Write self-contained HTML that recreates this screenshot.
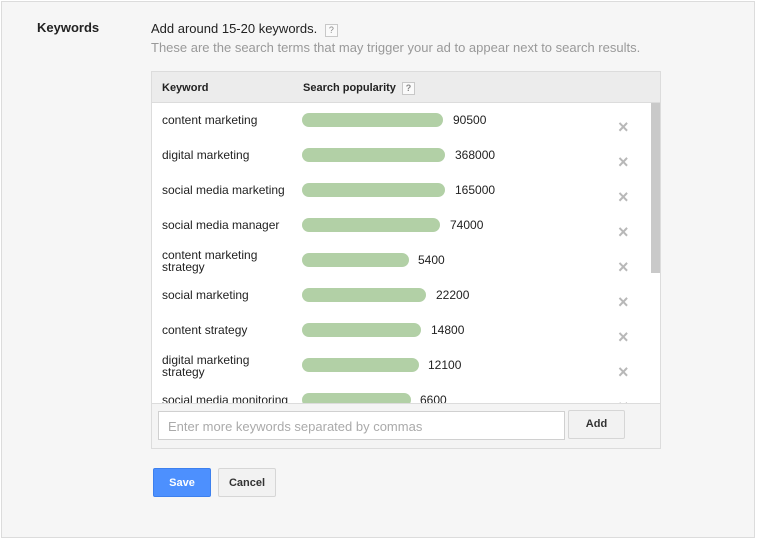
<!DOCTYPE html>
<html><head><style>
body{margin:0;width:758px;height:542px;background:#fff;font-family:"Liberation Sans",Arial,sans-serif;position:relative;overflow:hidden}
.a{position:absolute}
#box{left:1px;top:1px;width:752px;height:535px;background:#f6f6f6;border:1px solid #dcdcdc}
.q{display:inline-block;width:11px;height:11px;border:1px solid #c8c8c8;font-size:9px;line-height:11px;text-align:center;color:#888;background:#fafafa}
.kw{font-size:12px;color:#222;line-height:12px}
.bar{height:14px;border-radius:7px;background:#b2d0a6}
.num{font-size:12px;color:#222}
.x{font-size:18px;color:#b8b8b8;font-weight:bold}
</style></head><body>
<div id="box" class="a"></div>
<div class="a" style="left:37px;top:20px;font-size:13px;font-weight:bold;color:#222">Keywords</div>
<div class="a" style="left:151px;top:21px;font-size:13px;color:#222">Add around 15-20 keywords. <span class="q" style="margin-left:4px">?</span></div>
<div class="a" style="left:151px;top:40px;font-size:13px;color:#999">These are the search terms that may trigger your ad to appear next to search results.</div>
<div class="a" style="left:151px;top:71px;width:508px;height:376px;border:1px solid #dcdcdc;background:#fff"></div>
<div class="a" style="left:152px;top:72px;width:508px;height:30px;background:#ececec;border-bottom:1px solid #dcdcdc"></div>
<div class="a" style="left:162px;top:82px;font-size:11px;font-weight:bold;color:#222">Keyword</div>
<div class="a" style="left:303px;top:82px;font-size:11px;font-weight:bold;color:#222">Search popularity <span class="q" style="margin-left:3px">?</span></div>
<div class="a" style="left:651px;top:103px;width:9px;height:170px;background:#c9c9c9"></div>
<div class="a" style="left:152px;top:103px;width:498px;height:300px;overflow:hidden">
<div style="position:relative">
<div class="a kw" style="left:10px;top:11px">content marketing</div><div class="a bar" style="left:150px;top:10px;width:141px"></div><div class="a num" style="left:301px;top:10px">90500</div><div class="a x" style="left:466px;top:14px">×</div>
<div class="a kw" style="left:10px;top:46px">digital marketing</div><div class="a bar" style="left:150px;top:45px;width:143px"></div><div class="a num" style="left:303px;top:45px">368000</div><div class="a x" style="left:466px;top:49px">×</div>
<div class="a kw" style="left:10px;top:81px">social media marketing</div><div class="a bar" style="left:150px;top:80px;width:143px"></div><div class="a num" style="left:303px;top:80px">165000</div><div class="a x" style="left:466px;top:84px">×</div>
<div class="a kw" style="left:10px;top:116px">social media manager</div><div class="a bar" style="left:150px;top:115px;width:138px"></div><div class="a num" style="left:298px;top:115px">74000</div><div class="a x" style="left:466px;top:119px">×</div>
<div class="a kw" style="left:10px;top:146px">content marketing<br>strategy</div><div class="a bar" style="left:150px;top:150px;width:107px"></div><div class="a num" style="left:266px;top:150px">5400</div><div class="a x" style="left:466px;top:154px">×</div>
<div class="a kw" style="left:10px;top:186px">social marketing</div><div class="a bar" style="left:150px;top:185px;width:124px"></div><div class="a num" style="left:284px;top:185px">22200</div><div class="a x" style="left:466px;top:189px">×</div>
<div class="a kw" style="left:10px;top:221px">content strategy</div><div class="a bar" style="left:150px;top:220px;width:119px"></div><div class="a num" style="left:279px;top:220px">14800</div><div class="a x" style="left:466px;top:224px">×</div>
<div class="a kw" style="left:10px;top:251px">digital marketing<br>strategy</div><div class="a bar" style="left:150px;top:255px;width:117px"></div><div class="a num" style="left:276px;top:255px">12100</div><div class="a x" style="left:466px;top:259px">×</div>
<div class="a kw" style="left:10px;top:291px">social media monitoring</div><div class="a bar" style="left:150px;top:290px;width:109px"></div><div class="a num" style="left:268px;top:290px">6600</div><div class="a x" style="left:466px;top:294px">×</div>
</div></div>
<div class="a" style="left:152px;top:403px;width:508px;height:44px;background:#f4f4f4;border-top:1px solid #dcdcdc"></div>
<div class="a" style="left:158px;top:411px;width:405px;height:27px;background:#fff;border:1px solid #d0d0d0"></div>
<div class="a" style="left:168px;top:419px;font-size:13px;color:#aaa">Enter more keywords separated by commas</div>
<div class="a" style="left:568px;top:410px;width:55px;height:27px;background:#f2f2f2;border:1px solid #d6d6d6;border-radius:2px;font-size:11px;font-weight:bold;color:#333;text-align:center;line-height:27px">Add</div>
<div class="a" style="left:153px;top:468px;width:56px;height:27px;background:#4d90fe;border:1px solid #3d80ee;border-radius:2px;font-size:11px;font-weight:bold;color:#fff;text-align:center;line-height:28px">Save</div>
<div class="a" style="left:218px;top:468px;width:56px;height:27px;background:#f2f2f2;border:1px solid #d6d6d6;border-radius:2px;font-size:11px;font-weight:bold;color:#333;text-align:center;line-height:28px">Cancel</div>
</body></html>
